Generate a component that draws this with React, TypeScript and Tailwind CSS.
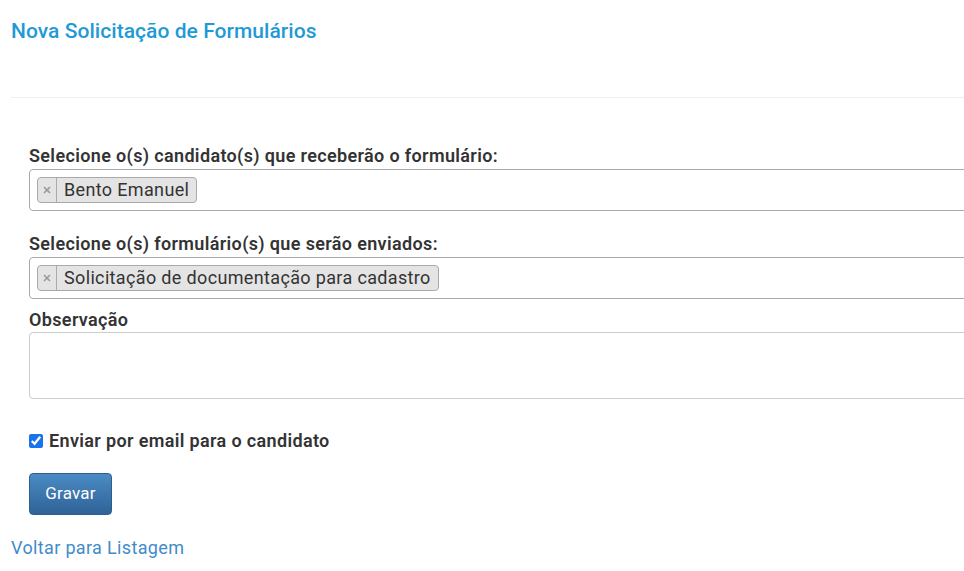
import { X } from "lucide-react";

function Chip({ label }: { label: string }) {
  return (
    <span className="flex h-[26px] items-center rounded border border-[#aaa] bg-[#e4e4e4] text-[18px] tracking-[0.35px] text-[#333]">
      <span className="flex h-full w-[19px] items-center justify-center border-r border-[#aaa] text-[#999]">
        <X className="h-[10px] w-[10px]" strokeWidth={4} />
      </span>
      <span className="px-[7px] leading-none">{label}</span>
    </span>
  );
}

export default function App() {
  return (
    <div className="min-h-[571px] w-[964px] overflow-hidden bg-white font-['Roboto',sans-serif] text-[#333]">
      <div className="pl-[11px] pt-[19px]">
        <h1 className="text-[21px] font-medium leading-[24px] tracking-[0.05px] text-[#1f9ad6]">
          Nova Solicitação de Formulários
        </h1>
        <hr className="mt-[54px] w-[1100px] border-t border-[#eee]" />
      </div>

      <form className="w-[1100px] pl-[29px] pt-[48px] tracking-[0.35px]">
        <label className="block text-[18px] font-semibold leading-[20px]">
          Selecione o(s) candidato(s) que receberão o formulário:
        </label>
        <div className="mt-[3px] flex h-[42px] items-center rounded border border-[#aaa] px-[7px]">
          <Chip label="Bento Emanuel" />
        </div>

        <label className="mt-[23px] block text-[18px] font-semibold leading-[20px]">
          Selecione o(s) formulário(s) que serão enviados:
        </label>
        <div className="mt-[3px] flex h-[42px] items-center rounded border border-[#aaa] px-[7px]">
          <Chip label="Solicitação de documentação para cadastro" />
        </div>

        <label className="mt-[11px] block text-[18px] font-semibold leading-[20px]">
          Observação
        </label>
        <textarea className="mt-[2px] block h-[67px] w-full resize-none rounded border border-[#ccc]" />

        <label className="mt-[32px] flex items-center gap-[6px] text-[18px] font-semibold leading-[20px]">
          <input type="checkbox" defaultChecked className="m-0 h-[14px] w-[14px] accent-[#1a73e8]" />
          Enviar por email para o candidato
        </label>

        <button
          type="button"
          className="mt-[22px] h-[42px] w-[83px] rounded border border-[#2d5f8b] bg-gradient-to-b from-[#4b8bc4] to-[#2f6397] text-[17px] tracking-[0.2px] text-white"
        >
          Gravar
        </button>
      </form>

      <a href="#" className="ml-[11px] mt-[19px] block text-[18px] tracking-[0.35px] text-[#428bca]">
        Voltar para Listagem
      </a>
    </div>
  );
}
